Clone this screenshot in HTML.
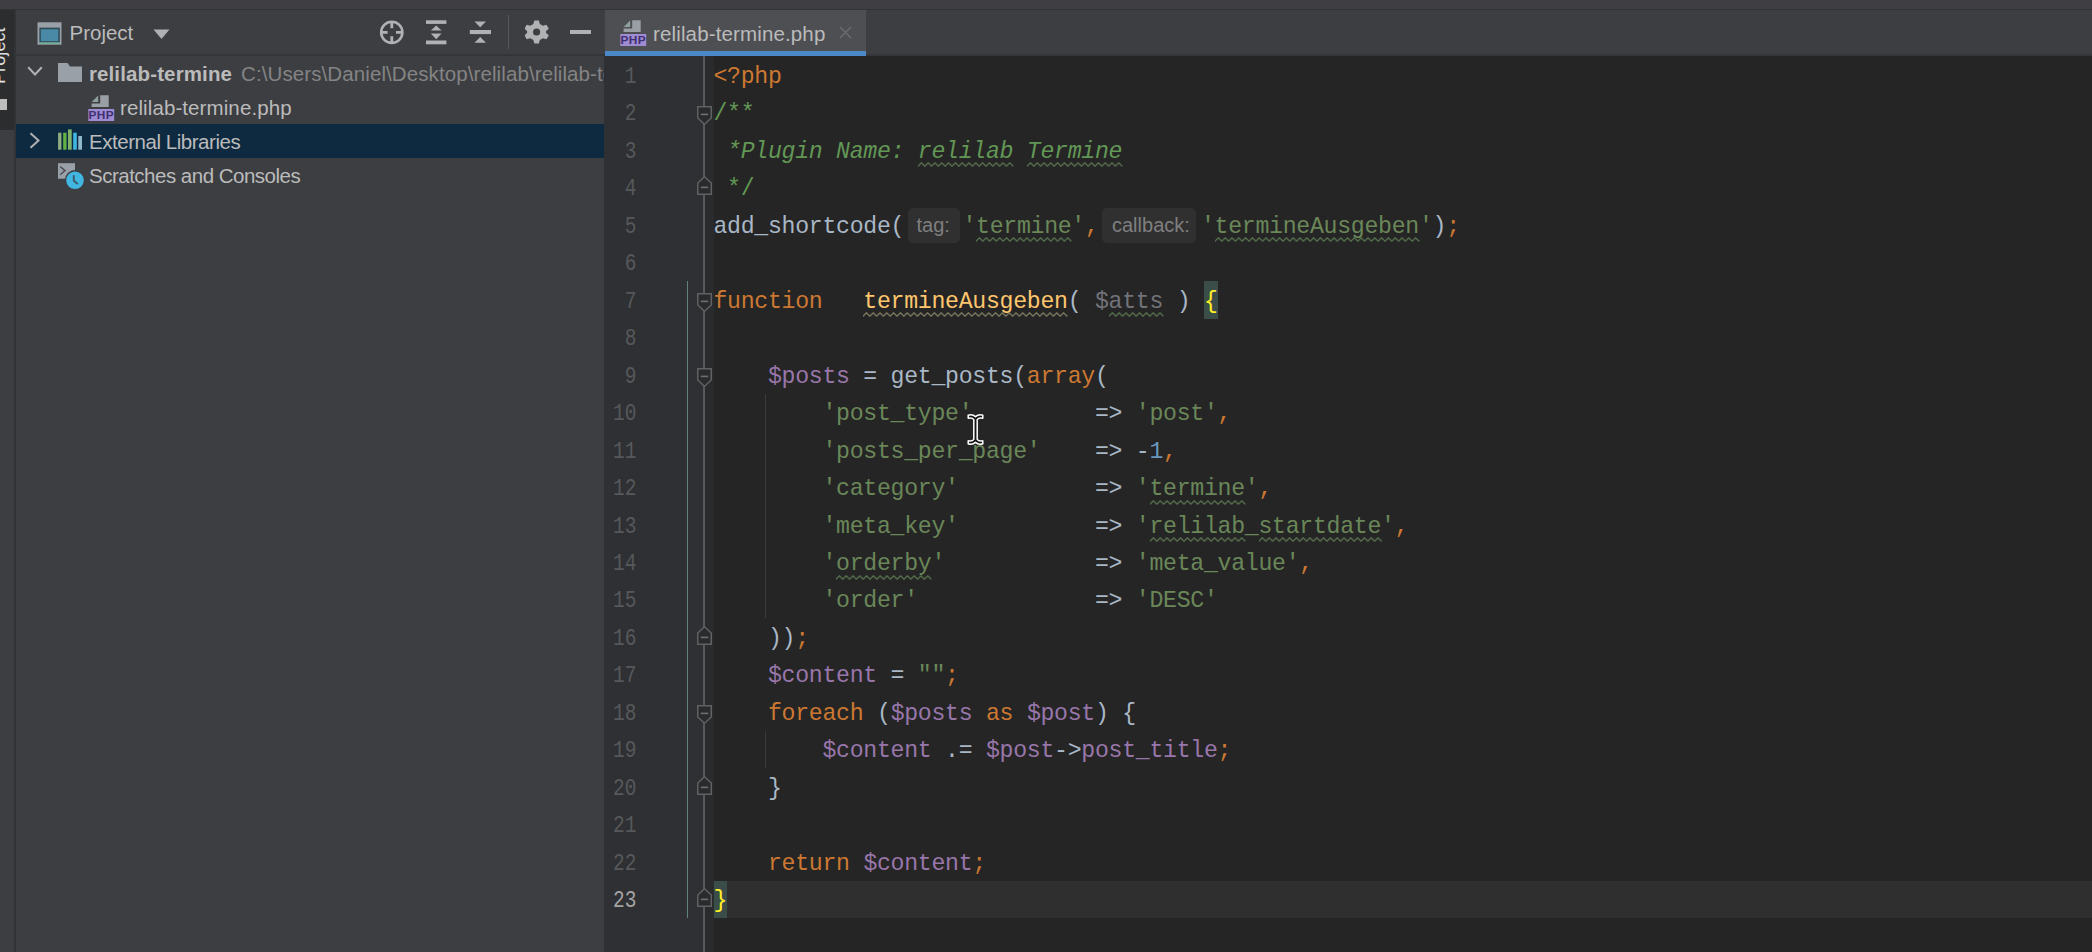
<!DOCTYPE html>
<html><head><meta charset="utf-8"><style>
*{margin:0;padding:0;box-sizing:border-box}
html,body{width:2092px;height:952px;overflow:hidden;background:#252525}
body{position:relative;font-family:"Liberation Sans",sans-serif}
.abs{position:absolute}
.cl{position:absolute;height:37.46px;line-height:37.46px;font-family:"Liberation Mono",monospace;font-size:23.200px;letter-spacing:-0.292px;white-space:pre;color:#A9B7C6}
.ln{position:absolute;left:586px;width:50.5px;text-align:right;transform:scaleX(0.84);transform-origin:100% 50%;height:37.46px;line-height:37.46px;font-family:"Liberation Mono",monospace;font-size:23.200px;white-space:pre}
.wv{position:absolute;overflow:visible}
.ui{position:absolute;white-space:pre;font-size:20.5px;line-height:24px;color:#BBBBBB}
</style></head><body>
<div class="abs" style="left:0;top:0;width:2092px;height:9px;background:#3F3E42"></div>
<div class="abs" style="left:0;top:9px;width:2092px;height:1px;background:#323234"></div>
<!-- left tool strip -->
<div class="abs" style="left:0;top:10px;width:15px;height:942px;background:#3D3E42"></div>
<div class="abs" style="left:0;top:10px;width:14px;height:120px;background:#2C2D2F"></div>
<div class="abs" style="left:14px;top:10px;width:1.5px;height:942px;background:#323336"></div>
<div class="ui" style="left:-10px;top:84px;transform:rotate(-90deg);transform-origin:0 0;color:#E0E0E0;font-size:18px;line-height:18px;letter-spacing:0.1px">Project</div>
<div class="abs" style="left:0;top:98.5px;width:7px;height:11.5px;background:#BDBDBD"></div>
<!-- project panel -->
<div class="abs" style="left:15.5px;top:10px;width:588px;height:942px;background:#3D3E42;overflow:hidden">
  <div class="abs" style="left:0;top:44px;width:588px;height:2px;background:#343538"></div>
</div>
<svg class="abs" style="left:37px;top:21.5px" width="25" height="23"><rect x="0.5" y="0.3" width="24" height="22.4" fill="#9AA0A8"/><rect x="2.4" y="5.6" width="20.4" height="14.9" fill="#2E4A55"/><rect x="3.8" y="7.3" width="17.5" height="11.9" fill="#4A8AA6"/><rect x="2.4" y="20.5" width="20.4" height="1.5" fill="#6FB39A"/></svg>
<div class="ui" style="left:69.5px;top:20.8px">Project</div>
<svg class="abs" style="left:153px;top:29px" width="17" height="11"><path d="M0.5,0.5 H16.5 L8.5,10 Z" fill="#AFB1B3"/></svg>
<svg class="abs" style="left:379px;top:20px" width="26" height="26"><circle cx="12.8" cy="12.3" r="10.6" fill="none" stroke="#AFB1B3" stroke-width="2.6"/><path d="M12.8,2 V8.3 M12.8,16.3 V22.6 M2.2,12.3 H8.6 M17,12.3 H23.4" stroke="#AFB1B3" stroke-width="2.8"/></svg>
<svg class="abs" style="left:425px;top:19px" width="22" height="27"><rect x="1" y="1.3" width="20.4" height="3.6" fill="#AFB1B3"/><rect x="1" y="21.5" width="20.4" height="3.8" fill="#AFB1B3"/><path d="M5.8,11.6 L11.2,6.5 L16.6,11.6 Z M5.8,14.5 L11.2,20.3 L16.6,14.5 Z" fill="#AFB1B3"/></svg>
<svg class="abs" style="left:469px;top:20px" width="23" height="24"><path d="M5.5,1.5 H17 L11.2,7.2 Z M5.5,22.7 H17 L11.2,17 Z" fill="#AFB1B3"/><rect x="0.8" y="10" width="21.2" height="4.1" fill="#AFB1B3"/></svg>
<div class="abs" style="left:508px;top:15px;width:1px;height:34px;background:#56585A"></div>
<svg class="abs" style="left:525px;top:20px" width="24" height="24"><g transform="translate(11.6,12)" fill="#AFB1B3"><path d="M-2.3,-11.5 H2.3 L3.2,-8 L6.4,-6.2 L9.9,-7.3 L12.2,-3.3 L9.5,-0.9 V0.9 L12.2,3.3 L9.9,7.3 L6.4,6.2 L3.2,8 L2.3,11.5 H-2.3 L-3.2,8 L-6.4,6.2 L-9.9,7.3 L-12.2,3.3 L-9.5,0.9 V-0.9 L-12.2,-3.3 L-9.9,-7.3 L-6.4,-6.2 L-3.2,-8 Z M0,-3.6 A3.6,3.6 0 1 0 0,3.6 A3.6,3.6 0 1 0 0,-3.6 Z" fill-rule="evenodd"/></g></svg>
<div class="abs" style="left:570px;top:30px;width:21.4px;height:4.2px;background:#AFB1B3"></div>
<!-- tree -->
<svg class="abs" style="left:27px;top:66px" width="16" height="11"><path d="M1.2,1.2 L8,8.5 L14.8,1.2" fill="none" stroke="#AFB1B3" stroke-width="2"/></svg>
<svg class="abs" style="left:58px;top:62.5px" width="25" height="20"><path d="M0,0 H9.5 L12,3.5 H24 V19 H0 Z" fill="#9AA0A8"/></svg>
<div class="abs" style="left:15.5px;top:56px;width:588px;height:40px;overflow:hidden">
<div class="ui" style="left:73.4px;top:5.5px;font-weight:bold;letter-spacing:0.13px">relilab-termine</div>
<div class="ui" style="left:225.5px;top:5.5px;color:#848484;letter-spacing:0.1px">C:\Users\Daniel\Desktop\relilab\relilab-termine</div>
</div>
<svg class="abs" style="left:88px;top:94.5px" width="27" height="27"><path d="M12.2,0.2 H20.7 V12 H3.6 V8.5 H12.2 Z" fill="#9A9FA6"/><path d="M3.6,7 L10.2,0.5 V7 Z" fill="#8E9FA0"/><rect x="0.3" y="14" width="25.9" height="12" fill="#9F8BD2"/><text x="13.2" y="24.4" text-anchor="middle" font-family="Liberation Sans" font-weight="bold" font-size="11.8" fill="#3E2F70" letter-spacing="0.4">PHP</text></svg>
<div class="ui" style="left:120px;top:96px;letter-spacing:0.1px">relilab-termine.php</div>
<div class="abs" style="left:15.5px;top:124px;width:588px;height:34px;background:#0E2A40"></div>
<svg class="abs" style="left:29px;top:132px" width="12" height="17"><path d="M1.5,1.2 L9.5,8.5 L1.5,15.8" fill="none" stroke="#AFB1B3" stroke-width="2"/></svg>
<svg class="abs" style="left:57px;top:129px" width="26" height="22"><rect x="1.1" y="3.7" width="3.3" height="17" fill="#8FAF80"/><rect x="6.2" y="3.7" width="3.3" height="17" fill="#62B543"/><rect x="11" y="0.4" width="3.7" height="20.3" fill="#7FB36C"/><rect x="16.2" y="3.7" width="3.6" height="17" fill="#40B6E0"/><rect x="21.3" y="7" width="3.7" height="13.7" fill="#8FB8CC"/></svg>
<div class="ui" style="left:89px;top:130px;letter-spacing:-0.46px">External Libraries</div>
<svg class="abs" style="left:57px;top:162px" width="28" height="28"><rect x="1" y="1.2" width="17" height="15.5" fill="#9AA0A8"/><path d="M3.2,4.5 L8,8.6 L3.2,12.7" fill="none" stroke="#4A4C50" stroke-width="1.4"/><circle cx="18" cy="18.3" r="10.2" fill="#3D3E42"/><circle cx="18" cy="18.3" r="8.8" fill="#40B6E0"/><path d="M16.8,13.2 V18.8 L20.8,22" fill="none" stroke="#3A5A6A" stroke-width="1.9"/></svg>
<div class="ui" style="left:89px;top:164px;letter-spacing:-0.5px">Scratches and Consoles</div>
<!-- tab bar -->
<div class="abs" style="left:603.5px;top:10px;width:1489px;height:46px;background:#3D3E42"></div>
<div class="abs" style="left:603.5px;top:54px;width:1489px;height:2px;background:#343538"></div>
<div class="abs" style="left:605px;top:10px;width:261px;height:46px;background:#4E4F53"></div>
<div class="abs" style="left:605px;top:50.8px;width:261px;height:5.2px;background:#4A88C7"></div>
<svg class="abs" style="left:619.5px;top:19.7px" width="27" height="27"><path d="M12.2,0.2 H20.7 V12 H3.6 V8.5 H12.2 Z" fill="#9A9FA6"/><path d="M3.6,7 L10.2,0.5 V7 Z" fill="#8E9FA0"/><rect x="0.3" y="14" width="25.9" height="12" fill="#9F8BD2"/><text x="13.2" y="24.4" text-anchor="middle" font-family="Liberation Sans" font-weight="bold" font-size="11.8" fill="#3E2F70" letter-spacing="0.4">PHP</text></svg>
<div class="ui" style="left:653px;top:22px;letter-spacing:0.14px">relilab-termine.php</div>
<svg class="abs" style="left:839px;top:26px" width="13" height="13"><path d="M1,1 L12,12 M12,1 L1,12" stroke="#6A6B6E" stroke-width="1.5"/></svg>
<!-- editor -->
<div class="abs" style="left:603.5px;top:56px;width:110px;height:896px;background:#2F3033"></div>
<div class="abs" style="left:705px;top:56px;width:8.5px;height:896px;background:#2A2B2D"></div>
<div class="abs" style="left:713.5px;top:880.62px;width:1379px;height:37.46px;background:#2F2F2F"></div>
<div class="abs" style="left:1204.18px;top:281.26px;width:13.63px;height:37.46px;background:#3A4D48"></div>
<div class="abs" style="left:713.5px;top:880.62px;width:13.63px;height:37.46px;background:#3A4D48"></div>
<!-- hints -->
<div class="abs" style="left:908px;top:208px;width:52px;height:34.5px;border-radius:5px;background:#303030"></div>
<div class="ui" style="left:916.5px;top:213px;color:#7F7F7F;font-size:20px">tag:</div>
<div class="abs" style="left:1102.4px;top:208.3px;width:94px;height:34.5px;border-radius:5px;background:#303030"></div>
<div class="ui" style="left:1112px;top:212.5px;color:#7F7F7F;font-size:20px">callback:</div>
<!-- guides -->
<div class="abs" style="left:703.2px;top:56px;width:1.8px;height:896px;background:#58595B"></div>
<div class="abs" style="left:686.5px;top:280.5px;width:1.8px;height:637.58px;background:#618080"></div>
<div class="abs" style="left:765px;top:393.64px;width:1px;height:224.76px;background:#3A3A3A"></div>
<div class="abs" style="left:765px;top:730.78px;width:1px;height:37.46px;background:#3A3A3A"></div>
<svg class="abs" style="left:697px;top:105.5px" width="15" height="19"><path d="M0.75,0.75 H14.25 V12 L7.5,18.25 L0.75,12 Z" fill="#2A2B2D" stroke="#606163" stroke-width="1.5"/><rect x="3.8" y="7.6" width="7.4" height="1.6" fill="#707173"/></svg><svg class="abs" style="left:697px;top:176.4px" width="15" height="19"><path d="M0.75,18.25 H14.25 V7 L7.5,0.75 L0.75,7 Z" fill="#2A2B2D" stroke="#606163" stroke-width="1.5"/><rect x="3.8" y="10.6" width="7.4" height="1.6" fill="#707173"/></svg><svg class="abs" style="left:697px;top:292.8px" width="15" height="19"><path d="M0.75,0.75 H14.25 V12 L7.5,18.25 L0.75,12 Z" fill="#2A2B2D" stroke="#606163" stroke-width="1.5"/><rect x="3.8" y="7.6" width="7.4" height="1.6" fill="#707173"/></svg><svg class="abs" style="left:697px;top:367.7px" width="15" height="19"><path d="M0.75,0.75 H14.25 V12 L7.5,18.25 L0.75,12 Z" fill="#2A2B2D" stroke="#606163" stroke-width="1.5"/><rect x="3.8" y="7.6" width="7.4" height="1.6" fill="#707173"/></svg><svg class="abs" style="left:697px;top:625.9px" width="15" height="19"><path d="M0.75,18.25 H14.25 V7 L7.5,0.75 L0.75,7 Z" fill="#2A2B2D" stroke="#606163" stroke-width="1.5"/><rect x="3.8" y="10.6" width="7.4" height="1.6" fill="#707173"/></svg><svg class="abs" style="left:697px;top:704.9px" width="15" height="19"><path d="M0.75,0.75 H14.25 V12 L7.5,18.25 L0.75,12 Z" fill="#2A2B2D" stroke="#606163" stroke-width="1.5"/><rect x="3.8" y="7.6" width="7.4" height="1.6" fill="#707173"/></svg><svg class="abs" style="left:697px;top:775.8px" width="15" height="19"><path d="M0.75,18.25 H14.25 V7 L7.5,0.75 L0.75,7 Z" fill="#2A2B2D" stroke="#606163" stroke-width="1.5"/><rect x="3.8" y="10.6" width="7.4" height="1.6" fill="#707173"/></svg><svg class="abs" style="left:697px;top:888.1px" width="15" height="19"><path d="M0.75,18.25 H14.25 V7 L7.5,0.75 L0.75,7 Z" fill="#2A2B2D" stroke="#606163" stroke-width="1.5"/><rect x="3.8" y="10.6" width="7.4" height="1.6" fill="#707173"/></svg>
<div class="ln" style="top:59.00px;color:#56585B">1</div><div class="ln" style="top:96.46px;color:#56585B">2</div><div class="ln" style="top:133.92px;color:#56585B">3</div><div class="ln" style="top:171.38px;color:#56585B">4</div><div class="ln" style="top:208.84px;color:#56585B">5</div><div class="ln" style="top:246.30px;color:#56585B">6</div><div class="ln" style="top:283.76px;color:#56585B">7</div><div class="ln" style="top:321.22px;color:#56585B">8</div><div class="ln" style="top:358.68px;color:#56585B">9</div><div class="ln" style="top:396.14px;color:#56585B">10</div><div class="ln" style="top:433.60px;color:#56585B">11</div><div class="ln" style="top:471.06px;color:#56585B">12</div><div class="ln" style="top:508.52px;color:#56585B">13</div><div class="ln" style="top:545.98px;color:#56585B">14</div><div class="ln" style="top:583.44px;color:#56585B">15</div><div class="ln" style="top:620.90px;color:#56585B">16</div><div class="ln" style="top:658.36px;color:#56585B">17</div><div class="ln" style="top:695.82px;color:#56585B">18</div><div class="ln" style="top:733.28px;color:#56585B">19</div><div class="ln" style="top:770.74px;color:#56585B">20</div><div class="ln" style="top:808.20px;color:#56585B">21</div><div class="ln" style="top:845.66px;color:#56585B">22</div><div class="ln" style="top:883.12px;color:#A4A3A3">23</div>
<div class="cl" style="top:59.00px;left:713.5px"><span style="color:#CC7832;">&lt;?php</span></div><div class="cl" style="top:96.46px;left:713.5px"><span style="color:#629755;">/**</span></div><div class="cl" style="top:133.92px;left:713.5px"><span style="color:#629755;font-style:italic"> *Plugin Name: relilab Termine</span></div><div class="cl" style="top:171.38px;left:713.5px"><span style="color:#629755;"> */</span></div><div class="cl" style="top:208.84px;left:713.5px">add_shortcode( </div><div class="cl" style="top:208.84px;left:962.4px"><span style="color:#6A8759;">'termine'</span><span style="color:#CC7832;">,</span></div><div class="cl" style="top:208.84px;left:1201px"><span style="color:#6A8759;">'termineAusgeben'</span>)<span style="color:#CC7832;">;</span></div><div class="cl" style="top:283.76px;left:713.5px"><span style="color:#CC7832;">function</span>   <span style="color:#FFC66D;">termineAusgeben</span>( <span style="color:#72737A;">$atts</span> ) <span style="color:#FFEF28;">{</span></div><div class="cl" style="top:358.68px;left:713.5px">    <span style="color:#9876AA;">$posts</span> = get_posts(<span style="color:#CC7832;">array</span>(</div><div class="cl" style="top:396.14px;left:713.5px">        <span style="color:#6A8759;">'post_type'</span>         =&gt; <span style="color:#6A8759;">'post'</span><span style="color:#CC7832;">,</span></div><div class="cl" style="top:433.60px;left:713.5px">        <span style="color:#6A8759;">'posts_per_page'</span>    =&gt; -<span style="color:#6897BB;">1</span><span style="color:#CC7832;">,</span></div><div class="cl" style="top:471.06px;left:713.5px">        <span style="color:#6A8759;">'category'</span>          =&gt; <span style="color:#6A8759;">'termine'</span><span style="color:#CC7832;">,</span></div><div class="cl" style="top:508.52px;left:713.5px">        <span style="color:#6A8759;">'meta_key'</span>          =&gt; <span style="color:#6A8759;">'relilab_startdate'</span><span style="color:#CC7832;">,</span></div><div class="cl" style="top:545.98px;left:713.5px">        <span style="color:#6A8759;">'orderby'</span>           =&gt; <span style="color:#6A8759;">'meta_value'</span><span style="color:#CC7832;">,</span></div><div class="cl" style="top:583.44px;left:713.5px">        <span style="color:#6A8759;">'order'</span>             =&gt; <span style="color:#6A8759;">'DESC'</span></div><div class="cl" style="top:620.90px;left:713.5px">    ))<span style="color:#CC7832;">;</span></div><div class="cl" style="top:658.36px;left:713.5px">    <span style="color:#9876AA;">$content</span> = <span style="color:#6A8759;">""</span><span style="color:#CC7832;">;</span></div><div class="cl" style="top:695.82px;left:713.5px">    <span style="color:#CC7832;">foreach</span> (<span style="color:#9876AA;">$posts</span><span style="color:#CC7832;"> as </span><span style="color:#9876AA;">$post</span>) {</div><div class="cl" style="top:733.28px;left:713.5px">        <span style="color:#9876AA;">$content</span> .= <span style="color:#9876AA;">$post</span>-&gt;<span style="color:#9876AA;">post_title</span><span style="color:#CC7832;">;</span></div><div class="cl" style="top:770.74px;left:713.5px">    }</div><div class="cl" style="top:845.66px;left:713.5px">    <span style="color:#CC7832;">return</span> <span style="color:#9876AA;">$content</span><span style="color:#CC7832;">;</span></div><div class="cl" style="top:883.12px;left:713.5px"><span style="color:#FFEF28;">}</span></div>
<svg width="0" height="0" style="position:absolute"><defs><pattern id="w55704d" width="6.8" height="5" patternUnits="userSpaceOnUse"><polyline points="-3.4,0.8 0,4.2 3.4,0.8 6.8,4.2 10.2,0.8" fill="none" stroke="#55704d" stroke-width="1.3"/></pattern><pattern id="w7d7a62" width="6.8" height="5" patternUnits="userSpaceOnUse"><polyline points="-3.4,0.8 0,4.2 3.4,0.8 6.8,4.2 10.2,0.8" fill="none" stroke="#7d7a62" stroke-width="1.3"/></pattern></defs></svg>
<svg class="wv" style="left:918.0px;top:162.4px" width="95.4" height="5"><rect width="100%" height="5" fill="url(#w55704d)"/></svg><svg class="wv" style="left:1027.0px;top:162.4px" width="95.4" height="5"><rect width="100%" height="5" fill="url(#w55704d)"/></svg><svg class="wv" style="left:976.0px;top:237.3px" width="95.4" height="5"><rect width="100%" height="5" fill="url(#w55704d)"/></svg><svg class="wv" style="left:1214.8px;top:237.3px" width="204.5" height="5"><rect width="100%" height="5" fill="url(#w55704d)"/></svg><svg class="wv" style="left:863.4px;top:312.3px" width="204.5" height="5"><rect width="100%" height="5" fill="url(#w7d7a62)"/></svg><svg class="wv" style="left:1108.8px;top:312.3px" width="54.5" height="5"><rect width="100%" height="5" fill="url(#w55704d)"/></svg><svg class="wv" style="left:1149.7px;top:499.6px" width="95.4" height="5"><rect width="100%" height="5" fill="url(#w55704d)"/></svg><svg class="wv" style="left:1149.7px;top:537.0px" width="95.4" height="5"><rect width="100%" height="5" fill="url(#w55704d)"/></svg><svg class="wv" style="left:1258.7px;top:537.0px" width="122.7" height="5"><rect width="100%" height="5" fill="url(#w55704d)"/></svg><svg class="wv" style="left:836.2px;top:574.5px" width="95.4" height="5"><rect width="100%" height="5" fill="url(#w55704d)"/></svg>
<svg class="abs" style="left:966.5px;top:412.5px" width="17" height="33"><path d="M1.2,2.2 Q5.2,0.6 8.5,3.6 Q11.8,0.6 15.8,2.2 V5.2 Q11.6,4.4 10.2,6.6 V26.4 Q11.6,28.6 15.8,27.8 V30.8 Q11.8,32.4 8.5,29.4 Q5.2,32.4 1.2,30.8 V27.8 Q5.4,28.6 6.8,26.4 V6.6 Q5.4,4.4 1.2,5.2 Z" fill="#151515" stroke="#FFFFFF" stroke-width="1.5" stroke-linejoin="round"/></svg>
</body></html>
